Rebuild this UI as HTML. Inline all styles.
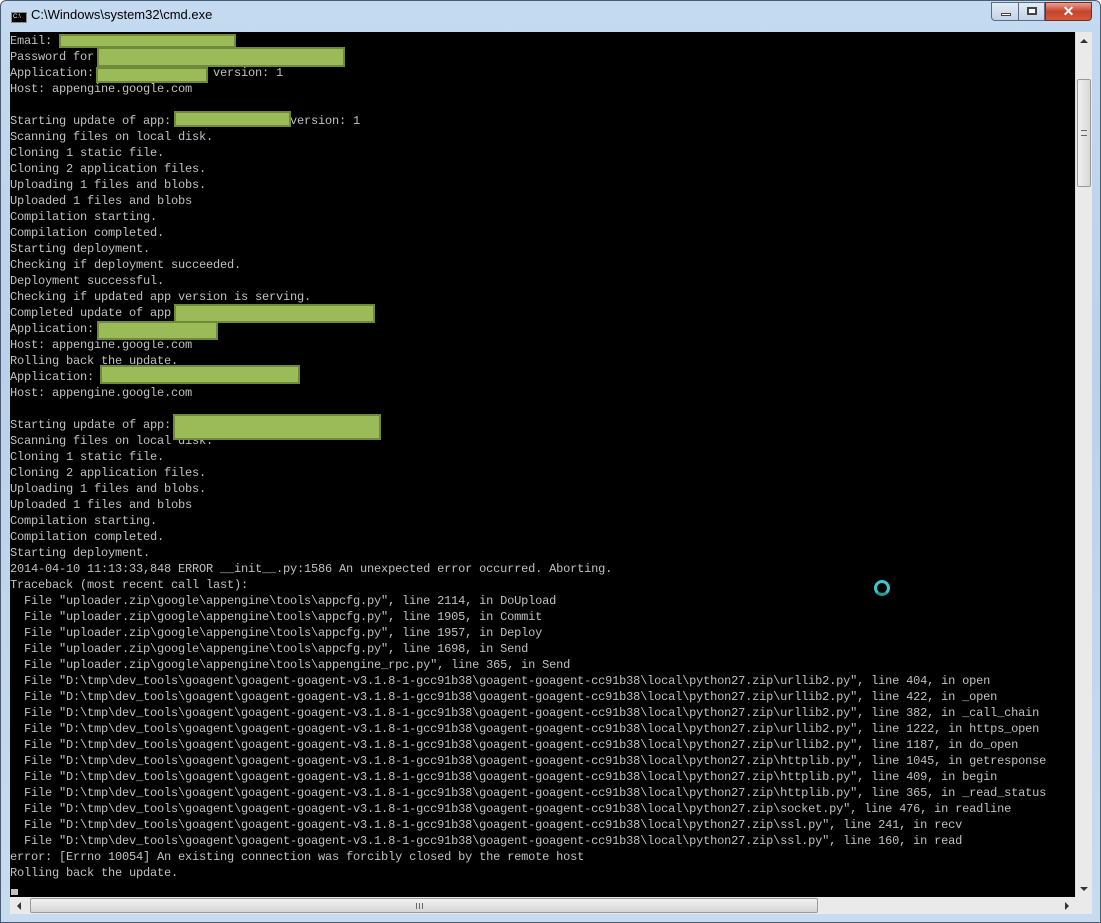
<!DOCTYPE html>
<html><head><meta charset="utf-8"><style>
*{margin:0;padding:0;box-sizing:border-box}
html,body{width:1101px;height:923px;overflow:hidden;background:#fff}
#win{position:absolute;left:0;top:0;width:1101px;height:923px;background:linear-gradient(#c4daf0,#b9d1ea 40%,#c8dcf0);border:1px solid #4a5c72;border-radius:6px 6px 0 0}
#title{position:absolute;left:30px;top:6px;font:13px "Liberation Sans",sans-serif;color:#000}
#ico{position:absolute;left:10px;top:11px;width:16px;height:11px;background:#000;border:1px solid #888;color:#fff;font:6px "Liberation Sans";line-height:9px;padding-left:1px}
.btn{position:absolute;top:1px;height:19px;border:1px solid #5a6c84;background:linear-gradient(#e3ecf6,#c3d3e6)}
#con{position:absolute;left:9px;top:31px;width:1065px;height:865px;background:#000;overflow:hidden}
pre{position:absolute;left:0px;top:1px;font:12px/16px "Liberation Mono",monospace;letter-spacing:-0.2px;color:#c0c0c0;white-space:pre}
.g{position:absolute;background:#9bbb59;border:2px solid #6e8a3a}
#vs{position:absolute;left:1074px;top:31px;width:17px;height:865px;background:#eaeaea;border-left:1px solid #ddd}
#hs{position:absolute;left:9px;top:896px;width:1065px;height:17px;background:#eaeaea}
</style></head><body><div id="win">
<div id="ico">C:\</div>
<div id="title">C:\Windows\system32\cmd.exe</div>
<div class="btn" style="left:990px;width:28px;border-radius:0 0 0 4px"><div style="position:absolute;left:9px;top:10px;width:10px;height:3px;background:#fff;border:1px solid #444"></div></div>
<div class="btn" style="left:1017px;width:27px"><div style="position:absolute;left:8px;top:4px;width:10px;height:8px;border:2px solid #444;background:#fff"></div></div>
<div class="btn" style="left:1044px;width:47px;background:linear-gradient(#e8a090,#c7442c 50%,#d05a3a);border-color:#7a2a20;border-radius:0 0 4px 0;color:#fff;font:bold 14px 'Liberation Sans';text-align:center;line-height:17px">✕</div>
<div id="con"><pre>Email:
Password for
Application:                 version: 1
Host: appengine.google.com

Starting update of app:                 version: 1
Scanning files on local disk.
Cloning 1 static file.
Cloning 2 application files.
Uploading 1 files and blobs.
Uploaded 1 files and blobs
Compilation starting.
Compilation completed.
Starting deployment.
Checking if deployment succeeded.
Deployment successful.
Checking if updated app version is serving.
Completed update of app
Application:
Host: appengine.google.com
Rolling back the update.
Application:
Host: appengine.google.com

Starting update of app:
Scanning files on local disk.
Cloning 1 static file.
Cloning 2 application files.
Uploading 1 files and blobs.
Uploaded 1 files and blobs
Compilation starting.
Compilation completed.
Starting deployment.
2014-04-10 11:13:33,848 ERROR __init__.py:1586 An unexpected error occurred. Aborting.
Traceback (most recent call last):
  File "uploader.zip\google\appengine\tools\appcfg.py", line 2114, in DoUpload
  File "uploader.zip\google\appengine\tools\appcfg.py", line 1905, in Commit
  File "uploader.zip\google\appengine\tools\appcfg.py", line 1957, in Deploy
  File "uploader.zip\google\appengine\tools\appcfg.py", line 1698, in Send
  File "uploader.zip\google\appengine\tools\appengine_rpc.py", line 365, in Send
  File "D:\tmp\dev_tools\goagent\goagent-goagent-v3.1.8-1-gcc91b38\goagent-goagent-cc91b38\local\python27.zip\urllib2.py", line 404, in open
  File "D:\tmp\dev_tools\goagent\goagent-goagent-v3.1.8-1-gcc91b38\goagent-goagent-cc91b38\local\python27.zip\urllib2.py", line 422, in _open
  File "D:\tmp\dev_tools\goagent\goagent-goagent-v3.1.8-1-gcc91b38\goagent-goagent-cc91b38\local\python27.zip\urllib2.py", line 382, in _call_chain
  File "D:\tmp\dev_tools\goagent\goagent-goagent-v3.1.8-1-gcc91b38\goagent-goagent-cc91b38\local\python27.zip\urllib2.py", line 1222, in https_open
  File "D:\tmp\dev_tools\goagent\goagent-goagent-v3.1.8-1-gcc91b38\goagent-goagent-cc91b38\local\python27.zip\urllib2.py", line 1187, in do_open
  File "D:\tmp\dev_tools\goagent\goagent-goagent-v3.1.8-1-gcc91b38\goagent-goagent-cc91b38\local\python27.zip\httplib.py", line 1045, in getresponse
  File "D:\tmp\dev_tools\goagent\goagent-goagent-v3.1.8-1-gcc91b38\goagent-goagent-cc91b38\local\python27.zip\httplib.py", line 409, in begin
  File "D:\tmp\dev_tools\goagent\goagent-goagent-v3.1.8-1-gcc91b38\goagent-goagent-cc91b38\local\python27.zip\httplib.py", line 365, in _read_status
  File "D:\tmp\dev_tools\goagent\goagent-goagent-v3.1.8-1-gcc91b38\goagent-goagent-cc91b38\local\python27.zip\socket.py", line 476, in readline
  File "D:\tmp\dev_tools\goagent\goagent-goagent-v3.1.8-1-gcc91b38\goagent-goagent-cc91b38\local\python27.zip\ssl.py", line 241, in recv
  File "D:\tmp\dev_tools\goagent\goagent-goagent-v3.1.8-1-gcc91b38\goagent-goagent-cc91b38\local\python27.zip\ssl.py", line 160, in read
error: [Errno 10054] An existing connection was forcibly closed by the remote host
Rolling back the update.</pre>
<div style="position:absolute;left:1px;top:857px;width:7px;height:6px;background:#c0c0c0"></div>
<div class="g" style="left:49px;top:2px;width:177px;height:14px"></div>
<div class="g" style="left:87px;top:15px;width:248px;height:20px"></div>
<div class="g" style="left:86px;top:35px;width:112px;height:16px"></div>
<div class="g" style="left:164px;top:79px;width:117px;height:16px"></div>
<div class="g" style="left:164px;top:272px;width:201px;height:19px"></div>
<div class="g" style="left:87px;top:289px;width:121px;height:19px"></div>
<div class="g" style="left:90px;top:333px;width:200px;height:19px"></div>
<div class="g" style="left:163px;top:382px;width:208px;height:26px"></div>
<div style="position:absolute;left:864px;top:548px;width:16px;height:16px;border-radius:50%;border:3px solid #3cc8c8;border-bottom-color:#1a9a90"></div>
</div>
<div id="vs">
<div style="position:absolute;left:4px;top:7px;width:0;height:0;border-left:4px solid transparent;border-right:4px solid transparent;border-bottom:4px solid #333"></div>
<div style="position:absolute;left:1px;top:47px;width:14px;height:108px;border:1px solid #9a9a9a;border-radius:2px;background:linear-gradient(90deg,#f2f2f2,#d8d8d8)"><div style="position:absolute;left:3px;top:50px;width:6px;height:6px;border-top:1px solid #666;border-bottom:1px solid #666"></div></div>
<div style="position:absolute;left:4px;top:855px;width:0;height:0;border-left:4px solid transparent;border-right:4px solid transparent;border-top:4px solid #333"></div>
</div>
<div id="hs">
<div style="position:absolute;left:7px;top:5px;width:0;height:0;border-top:4px solid transparent;border-bottom:4px solid transparent;border-right:4px solid #333"></div>
<div style="position:absolute;left:20px;top:1px;width:788px;height:15px;border:1px solid #9a9a9a;border-radius:2px;background:linear-gradient(#f2f2f2,#d6d6d6)"><div style="position:absolute;left:385px;top:4px;width:7px;height:6px;border-left:1px solid #666;border-right:1px solid #666"><div style="margin-left:2px;width:1px;height:6px;background:#666"></div></div></div>
<div style="position:absolute;left:1055px;top:5px;width:0;height:0;border-top:4px solid transparent;border-bottom:4px solid transparent;border-left:4px solid #333"></div>
</div>
<div style="position:absolute;left:1074px;top:896px;width:17px;height:17px;background:#eaeaea"></div>
</div></body></html>
